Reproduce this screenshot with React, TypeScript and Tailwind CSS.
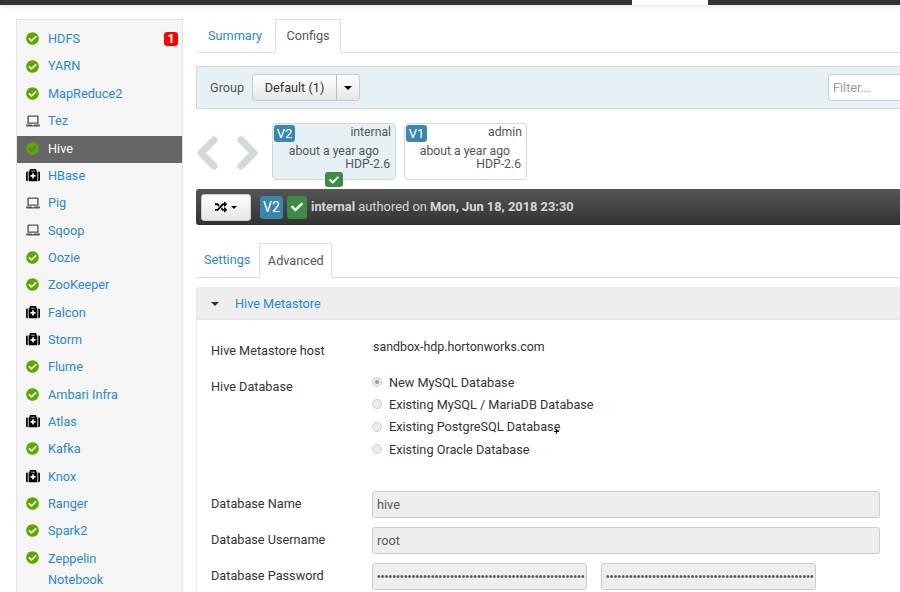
import { FaCheck, FaCheckCircle, FaLaptop, FaMedkit, FaRandom } from 'react-icons/fa'

const services = [
  { name: 'HDFS', icon: 'ok', alert: 1 },
  { name: 'YARN', icon: 'ok' },
  { name: 'MapReduce2', icon: 'ok' },
  { name: 'Tez', icon: 'client' },
  { name: 'Hive', icon: 'ok', active: true },
  { name: 'HBase', icon: 'down' },
  { name: 'Pig', icon: 'client' },
  { name: 'Sqoop', icon: 'client' },
  { name: 'Oozie', icon: 'ok' },
  { name: 'ZooKeeper', icon: 'ok' },
  { name: 'Falcon', icon: 'down' },
  { name: 'Storm', icon: 'down' },
  { name: 'Flume', icon: 'ok' },
  { name: 'Ambari Infra', icon: 'ok' },
  { name: 'Atlas', icon: 'down' },
  { name: 'Kafka', icon: 'ok' },
  { name: 'Knox', icon: 'down' },
  { name: 'Ranger', icon: 'ok' },
  { name: 'Spark2', icon: 'ok' },
]

function StatusIcon({ type }: { type: string }) {
  if (type === 'ok') return <FaCheckCircle className="text-[13px] text-[#5fa800]" />
  if (type === 'client') return <FaLaptop className="text-[14px] text-[#555555]" />
  return <FaMedkit className="text-[14px] text-black" />
}

function Chevron({ points }: { points: string }) {
  return (
    <svg width="21" height="34" viewBox="0 0 21 34" className="shrink-0">
      <polyline points={points} fill="none" stroke="#d2d9dd" strokeWidth="7" strokeLinejoin="round" strokeLinecap="round" />
    </svg>
  )
}

function VersionCard({ version, author, selected }: { version: string; author: string; selected?: boolean }) {
  return (
    <div className={`relative h-[57px] rounded border border-[#d2d9dd] pr-1 text-[12.2px] leading-[13px] text-[#555555] ${selected ? 'w-[124px] bg-[#e6f1f6]' : 'w-[123px] bg-white'}`}>
      <div className="flex items-start justify-between pl-[1px] pt-[1px]">
        <span className="flex h-[17px] w-[21px] items-center justify-center rounded-[3px] bg-[#3a87ad] text-[13px] text-white">{version}</span>
        <span className="pt-[1px]">{author}</span>
      </div>
      <div className="mt-[3px] pr-[12px] text-right">about a year ago</div>
      <div className="pr-[1px] text-right">HDP-2.6</div>
      {selected && (
        <span className="absolute left-[52px] top-[48px] flex h-[15px] w-[18px] items-center justify-center rounded-[3px] bg-[#3f8a45] text-[10px] text-white">
          <FaCheck />
        </span>
      )}
    </div>
  )
}

function FormRow({ label, children }: { label: string; children: React.ReactNode }) {
  return (
    <div className="flex h-[27px] items-center">
      <div className="w-[161px] shrink-0 pb-[2px] text-[#333333]">{label}</div>
      {children}
    </div>
  )
}

function DisabledInput({ value, width }: { value: string; width: string }) {
  return (
    <div className={`flex h-[27px] items-center overflow-hidden whitespace-nowrap rounded-[3px] border border-[#cccccc] bg-[#eeeeee] pb-[1px] pl-[4px] text-[#555555] ${width}`}>
      {value}
    </div>
  )
}

function Radio({ label, checked }: { label: string; checked?: boolean }) {
  return (
    <div className="flex h-[22.3px] items-center gap-[7px] text-[#333333]">
      <span className="flex h-[10px] w-[10px] items-center justify-center rounded-full border border-[#cfcfcf] bg-[#ececec]">
        {checked && <span className="h-[4px] w-[4px] rounded-full bg-[#999999]" />}
      </span>
      {label}
    </div>
  )
}

export default function App() {
  const dots = '•'.repeat(54)

  return (
    <div className="relative h-[592px] w-[900px] overflow-hidden bg-white font-['Roboto',sans-serif] text-[12.7px]">
      <div className="flex h-[5px] shadow-[0_1px_4px_rgba(0,0,0,0.12)]">
        <div className="w-[632px] bg-[#333333]" />
        <div className="w-[76px] bg-white" />
        <div className="flex-1 bg-[#333333]" />
      </div>

      <div className="flex items-start pl-[16px] pt-[14px]">
        <div className="h-[600px] w-[167px] shrink-0 border border-[#e2e2e2] bg-[#f5f5f5] pt-[6.5px]">
          {services.map((s) => (
            <div key={s.name} className={`flex h-[27.35px] items-center pb-[3px] pl-[8px] pr-[4px] ${s.active ? 'bg-[#666666] text-white' : 'text-[#2a88cc]'}`}>
              <span className="flex w-[15px] justify-center"><StatusIcon type={s.icon} /></span>
              <span className="ml-[8px] flex-1">{s.name}</span>
              {s.alert && <span className="flex h-[14px] w-[14px] items-center justify-center rounded-[3px] bg-[#ff0000] text-[13px] font-bold text-white">{s.alert}</span>}
            </div>
          ))}
          <div className="flex pl-[8px] pt-[1.5px] text-[#2a88cc]">
            <span className="flex w-[15px] justify-center pt-[3px]"><StatusIcon type="ok" /></span>
            <span className="ml-[8px] leading-[21px]">Zeppelin<br />Notebook</span>
          </div>
        </div>

        <div className="ml-[13px] w-[760px] shrink-0">
          <div className="flex h-[34px] border-b border-[#dddddd]">
            <div className="flex h-[33px] w-[79px] items-center pl-[12px] text-[#2a88cc]">Summary</div>
            <div className="flex h-[34px] w-[66px] items-center justify-center border border-b-white border-[#dddddd] bg-white text-[#555555]">Configs</div>
          </div>

          <div className="mt-[13px] flex h-[43px] items-center border border-[#d2d9dd] bg-[#e6f1f6] pl-[13px]">
            <span className="w-[42px] text-[#555555]">Group</span>
            <div className="flex h-[27px] w-[108px] rounded-[3px] border border-[#cccccc] bg-gradient-to-b from-white to-[#e6e6e6] text-[#333333]">
              <span className="flex w-[84px] items-center justify-center border-r border-[#bbbbbb]">Default (1)</span>
              <span className="flex flex-1 items-center justify-center">
                <span className="border-x-[4px] border-t-[4px] border-x-transparent border-t-black" />
              </span>
            </div>
            <div className="ml-[468px] flex h-[27px] w-[100px] items-center rounded-[3px] border border-[#cccccc] bg-white pl-[4px] text-[#999999]">Filter...</div>
          </div>

          <div className="mt-[14px] flex items-start">
            <div className="flex h-[57px] w-[76px] items-start gap-[19px] pl-[1px] pt-[13px]">
              <Chevron points="17,4 4,17 17,30" />
              <Chevron points="4,4 17,17 4,30" />
            </div>
            <VersionCard version="V2" author="internal" selected />
            <div className="w-[8px]" />
            <VersionCard version="V1" author="admin" />
          </div>

          <div className="mt-[9px] flex h-[36px] items-center rounded-[3px] bg-gradient-to-b from-[#555555] to-[#333333] pl-[5px] text-[12.85px] text-[#d8d8d8]">
            <div className="flex h-[27px] w-[50px] items-center justify-center gap-[4px] rounded-[3px] border border-[#cccccc] bg-gradient-to-b from-white to-[#e6e6e6] text-black">
              <FaRandom className="text-[12px]" />
              <span className="border-x-[3px] border-t-[3px] border-x-transparent border-t-black" />
            </div>
            <span className="ml-[9px] flex h-[23px] w-[23px] items-center justify-center rounded-[3px] bg-[#3a87ad] text-[14px] text-white">V2</span>
            <span className="ml-[4px] flex h-[23px] w-[20px] items-center justify-center rounded-[3px] bg-[#3f8a45] text-[12px] text-white"><FaCheck /></span>
            <span className="ml-[4px]"><b>internal</b> authored on <b>Mon, Jun 18, 2018 23:30</b></span>
          </div>

          <div className="mt-[18px] flex h-[35px] border-b border-[#dddddd]">
            <div className="flex h-[34px] items-center pl-[8px] pr-[9px] text-[#2a88cc]">Settings</div>
            <div className="flex h-[35px] w-[73px] items-center justify-center border border-b-white border-[#dddddd] bg-white text-[#555555]">Advanced</div>
          </div>

          <div className="mt-[9px] h-[320px] border-l border-[#e6e6e6]">
            <div className="flex h-[33px] items-center border-b border-[#e4e4e4] bg-[#eeeeee] pl-[14px] pt-[1px] text-[#2a88cc]">
              <span className="border-x-[4px] border-t-[4px] border-x-transparent border-t-[#333333]" />
              <span className="ml-[16px]">Hive Metastore</span>
            </div>
            <div className="pl-[14px]">
              <div className="flex h-[40px] items-end">
                <div className="w-[162px] text-[#333333]">Hive Metastore host</div>
              </div>
              <div className="-mt-[22px] ml-[162px] h-[20px] text-[12.4px] text-[#333333]">sandbox-hdp.hortonworks.com</div>
              <div className="mt-[17px] flex items-start">
                <div className="w-[161px] pt-[2px] text-[#333333]">Hive Database</div>
                <div className="-mt-[4px]">
                  <Radio label="New MySQL Database" checked />
                  <Radio label="Existing MySQL / MariaDB Database" />
                  <Radio label="Existing PostgreSQL Database" />
                  <Radio label="Existing Oracle Database" />
                </div>
              </div>
              <div className="mt-[31px] flex flex-col gap-[9px]">
                <FormRow label="Database Name"><DisabledInput value="hive" width="w-[508px]" /></FormRow>
                <FormRow label="Database Username"><DisabledInput value="root" width="w-[508px]" /></FormRow>
                <FormRow label="Database Password">
                  <DisabledInput value={dots} width="w-[215px] font-['Liberation_Sans',sans-serif] text-[10px] tracking-[0.35px]" />
                  <div className="w-[14px]" />
                  <DisabledInput value={dots} width="w-[215px] font-['Liberation_Sans',sans-serif] text-[10px] tracking-[0.35px]" />
                </FormRow>
              </div>
            </div>
          </div>
        </div>
      </div>

      {/* mouse cursor caught in the screenshot */}
      <svg width="5" height="5" viewBox="0 0 5 5" className="absolute left-[554px] top-[429px]">
        <path d="M2.5 0V5M0 2.5H5" stroke="#111111" strokeWidth="1" />
      </svg>
    </div>
  )
}
